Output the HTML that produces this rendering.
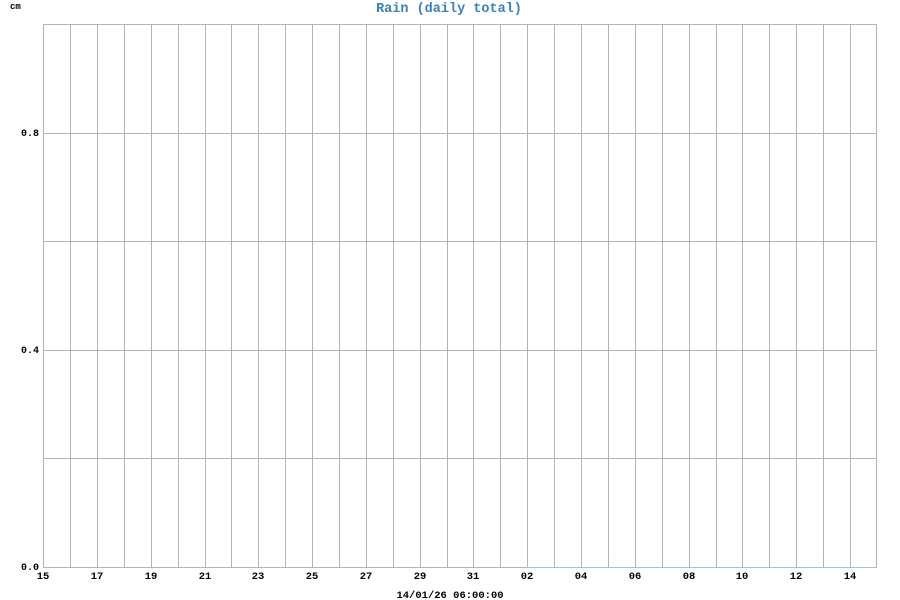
<!DOCTYPE html>
<html><head><style>
html,body{margin:0;padding:0;background:#fff;width:900px;height:600px;overflow:hidden}
text{font-family:"Liberation Mono",monospace;font-weight:bold}
</style></head><body>
<svg width="900" height="600" xmlns="http://www.w3.org/2000/svg">
<g stroke="#b4b4b4" stroke-width="1" shape-rendering="crispEdges">
<line x1="43" y1="24.5" x2="877" y2="24.5"/>
<line x1="43" y1="133.5" x2="877" y2="133.5"/>
<line x1="43" y1="241.5" x2="877" y2="241.5"/>
<line x1="43" y1="350.5" x2="877" y2="350.5"/>
<line x1="43" y1="458.5" x2="877" y2="458.5"/>
<line x1="43" y1="567.5" x2="877" y2="567.5"/>
<line x1="43.5" y1="24" x2="43.5" y2="567"/><line x1="70.5" y1="24" x2="70.5" y2="567"/><line x1="97.5" y1="24" x2="97.5" y2="567"/><line x1="124.5" y1="24" x2="124.5" y2="567"/><line x1="151.5" y1="24" x2="151.5" y2="567"/><line x1="178.5" y1="24" x2="178.5" y2="567"/><line x1="205.5" y1="24" x2="205.5" y2="567"/><line x1="231.5" y1="24" x2="231.5" y2="567"/><line x1="258.5" y1="24" x2="258.5" y2="567"/><line x1="285.5" y1="24" x2="285.5" y2="567"/><line x1="312.5" y1="24" x2="312.5" y2="567"/><line x1="339.5" y1="24" x2="339.5" y2="567"/><line x1="366.5" y1="24" x2="366.5" y2="567"/><line x1="393.5" y1="24" x2="393.5" y2="567"/><line x1="420.5" y1="24" x2="420.5" y2="567"/><line x1="447.5" y1="24" x2="447.5" y2="567"/><line x1="473.5" y1="24" x2="473.5" y2="567"/><line x1="500.5" y1="24" x2="500.5" y2="567"/><line x1="527.5" y1="24" x2="527.5" y2="567"/><line x1="554.5" y1="24" x2="554.5" y2="567"/><line x1="581.5" y1="24" x2="581.5" y2="567"/><line x1="608.5" y1="24" x2="608.5" y2="567"/><line x1="635.5" y1="24" x2="635.5" y2="567"/><line x1="662.5" y1="24" x2="662.5" y2="567"/><line x1="689.5" y1="24" x2="689.5" y2="567"/><line x1="716.5" y1="24" x2="716.5" y2="567"/><line x1="742.5" y1="24" x2="742.5" y2="567"/><line x1="769.5" y1="24" x2="769.5" y2="567"/><line x1="796.5" y1="24" x2="796.5" y2="567"/><line x1="823.5" y1="24" x2="823.5" y2="567"/><line x1="850.5" y1="24" x2="850.5" y2="567"/><line x1="876.5" y1="24" x2="876.5" y2="567"/>
</g>
<line x1="527" y1="567.5" x2="877" y2="567.5" stroke="#9fc3e0" stroke-width="1" shape-rendering="crispEdges"/>
<text x="449" y="12" text-anchor="middle" font-size="13.5" fill="#3a7fc0">Rain (daily total)</text>
<text x="10" y="9" font-size="9" fill="#000">cm</text>
<g font-size="10" fill="#000" text-anchor="end">
<text x="39" y="136">0.8</text>
<text x="39" y="353">0.4</text>
<text x="39" y="570">0.0</text>
</g>
<g font-size="10.5" fill="#000" text-anchor="middle">
<text x="43" y="579">15</text><text x="97" y="579">17</text><text x="151" y="579">19</text><text x="205" y="579">21</text><text x="258" y="579">23</text><text x="312" y="579">25</text><text x="366" y="579">27</text><text x="420" y="579">29</text><text x="473" y="579">31</text><text x="527" y="579">02</text><text x="581" y="579">04</text><text x="635" y="579">06</text><text x="689" y="579">08</text><text x="742" y="579">10</text><text x="796" y="579">12</text><text x="850" y="579">14</text>
<text x="450" y="598">14/01/26 06:00:00</text>
</g>
</svg>
</body></html>
